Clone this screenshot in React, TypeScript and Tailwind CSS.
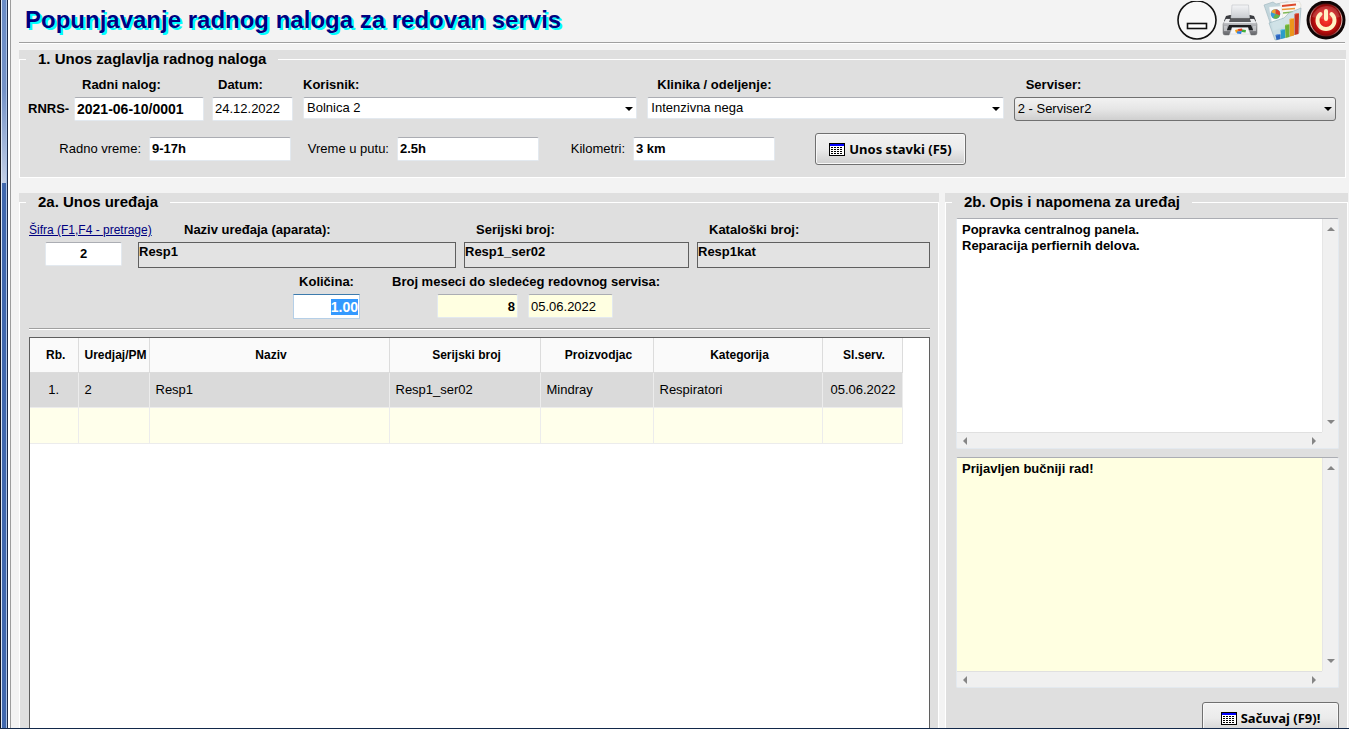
import { useEffect, useRef, useState } from "react";
import type { ReactNode } from "react";

type Item = {
  id: number;
  code: string;
  name: string;
  serial: string;
  vendor: string;
  category: string;
  lastService: string;
};

const items: Item[] = [
  {
    id: 1,
    code: "2",
    name: "Resp1",
    serial: "Resp1_ser02",
    vendor: "Mindray",
    category: "Respiratori",
    lastService: "05.06.2022",
  },
];

const inputBase =
  "h-6 rounded-xs border border-[#e3e9ef] border-t-[#abadb3] bg-white px-[2px] pb-[2px] text-[13px] leading-4 outline-none";
const readOnlyBase =
  "h-[26px] w-full border border-[#5f5f5f] bg-[#e3e3e3] pb-2 text-[13px] leading-4 font-bold outline-none";
const labelBase = "text-[13px] leading-4 font-bold whitespace-nowrap";
const buttonBase =
  "flex h-8 items-center justify-center gap-1 rounded-[3px] border border-[#707070] bg-linear-to-b from-[#f2f2f2] from-0% via-[#ebebeb] via-50% to-[#cfcfcf] text-[13px] leading-4 font-bold whitespace-nowrap shadow-[inset_0_0_0_1px_#f8f8f8] font-['Noto_Sans',sans-serif]";

const Group = ({ title, className, children }: { title: string; className?: string; children: ReactNode }) => (
  <div className={`flex bg-[#dfdfdf] ${className ?? ""}`}>
    <fieldset className="min-w-0 flex-1 border border-white">
      <legend className="ml-[6px] px-3 text-[15px] leading-[18px] font-bold">{title}</legend>
      {children}
    </fieldset>
  </div>
);

const Divider = () => <div className="h-[2px] border-t border-[#a0a0a0] bg-white" />;

const Arrow = ({ className }: { className?: string }) => (
  <svg viewBox="0 0 8 4" className={className} aria-hidden="true">
    <path d="M0 0h8L4 4z" fill="currentColor" />
  </svg>
);

type ComboProps = {
  id: string;
  label: string;
  value: string;
  className: string;
  labelClass: string;
  raised?: boolean;
};

const Combo = ({ id, label, value, className, labelClass, raised }: ComboProps) => (
  <div className={`min-w-0 ${className}`}>
    <label htmlFor={id} className={`${labelBase} block ${labelClass}`}>
      {label}
    </label>
    <div className="relative mt-1">
      <select
        id={id}
        defaultValue={value}
        className={
          raised
            ? "block h-6 w-full appearance-none rounded-[3px] border border-[#707070] bg-linear-to-b from-[#f2f2f2] via-[#e6e6e6] to-[#cfcfcf] px-[3px] text-[13px] leading-4 outline-none"
            : "block h-[22px] w-full appearance-none rounded-xs border border-[#e3e9ef] border-t-[#abadb3] bg-white px-[3px] text-[13px] leading-4 outline-none"
        }
      >
        <option>{value}</option>
      </select>
      <Arrow className="pointer-events-none absolute top-[10px] right-1 h-1 w-2" />
    </div>
  </div>
);

const TableIcon = () => (
  <svg viewBox="0 0 16 13" className="h-[13px] w-4" shapeRendering="crispEdges" aria-hidden="true">
    <rect width="16" height="13" fill="#000" />
    <rect x="1" y="1" width="14" height="11" fill="#fff" />
    <rect x="1" y="1" width="14" height="2" fill="#00f" />
    <path
      d="M2 4.5h12M2 6.5h12M2 8.5h12M2 10.5h12"
      stroke="#000"
      strokeWidth="1"
      strokeDasharray="2 1"
    />
  </svg>
);

const MinimizeIcon = () => (
  <svg viewBox="0 0 40 40" className="size-10" aria-hidden="true">
    <circle cx="20" cy="19" r="19" fill="#f8f8f8" stroke="#111" strokeWidth="1.6" />
    <rect x="10.5" y="22.5" width="19" height="5" fill="#fff" stroke="#111" strokeWidth="1.6" />
  </svg>
);

const PrinterIcon = () => (
  <svg viewBox="0 0 40 40" className="size-10" aria-hidden="true">
    <defs>
      <linearGradient id="paper" x2="0" y2="1">
        <stop stopColor="#f4f5f7" />
        <stop offset="1" stopColor="#c9ccd1" />
      </linearGradient>
      <linearGradient id="body" x2="0" y2="1">
        <stop stopColor="#dcdde0" />
        <stop offset=".5" stopColor="#a3a4a8" />
        <stop offset="1" stopColor="#5f6064" />
      </linearGradient>
    </defs>
    <path d="M6 15l4-1h20l4 1 2 5H4z" fill="#3a3b3f" />
    <path d="M12 4h16.500l1 13h-18.500z" fill="url(#paper)" stroke="#bfc2c7" strokeWidth=".6" />
    <path d="M6 18h28l3 5v9q0 2-2 2h-4l-2-4H11l-2 4H5q-2 0-2-2v-9z" fill="url(#body)" stroke="#77787b" strokeWidth=".5" />
    <path d="M6 18h28l2 4H4z" fill="#ebecee" />
    <path d="M10 18h20l1 3H9z" fill="#595a5e" />
    <path d="M9 24h22l2 5H7z" fill="#1d1e21" />
    <path d="M12 26.500h16l2 6.500H10z" fill="#f6f7f9" stroke="#c4c6ca" strokeWidth=".4" />
    <path d="M15 29l4-1 1 2-4 2z" fill="#f0a01c" />
    <path d="M18 28l4-.5.5 2.500h-4z" fill="#e33a26" />
    <path d="M22 28.500l4 .5-.5 2.500-4-.5z" fill="#42ad3d" />
    <path d="M17 30.500l5-.5-1 3-4-.5z" fill="#2f7ee0" />
    <path d="M4 25h3v5H4zM33 25h3v5h-3z" fill="#d2d3d6" fillOpacity=".7" />
  </svg>
);

const ReportIcon = () => (
  <svg viewBox="0 0 40 40" className="size-10" aria-hidden="true">
    <path d="M1 4l9-3 3 2 11-2 12 3-5 30-18 5z" fill="#c3d6dc" stroke="#9db5be" strokeWidth=".6" />
    <path d="M17 2l19-2 2 4-2 20-18 2z" fill="#f9f7f1" stroke="#d5d3cc" strokeWidth=".5" />
    <path d="M19 5l14-1.500" stroke="#dc4a2c" strokeWidth="1.800" />
    <path d="M19 8.500l13-1" stroke="#ee9a3a" strokeWidth="1.600" />
    <path d="M20 12l10-1" stroke="#7fb85a" strokeWidth="1.400" />
    <path d="M6 6l12-1 3 21-11 4z" fill="#f8fafa" stroke="#cfdade" strokeWidth=".4" />
    <circle cx="12.500" cy="13" r="4.800" fill="#3b9bd6" />
    <path d="M12.500 13V8.200a4.800 4.800 0 0 1 4.500 6.400z" fill="#e0412b" />
    <path d="M12.500 13l4.500 1.600a4.800 4.800 0 0 1-7 2.300z" fill="#69b345" />
    <path d="M12.500 13V8.200a4.800 4.800 0 0 0-4.300 3z" fill="#f2a52e" />
    <path d="M6 22l15-5 5-5 12-5-2 25-24 7z" fill="#c9dee4" fillOpacity=".88" stroke="#94b0ba" strokeWidth=".6" />
    <path d="M12.500 34l3.500-1 1.500.5V38l-4 1z" fill="#2a64bf" />
    <path d="M12.500 34l3.500-1 1.500.5-4 1z" fill="#6ea1e6" />
    <path d="M17.500 29l3-1 1.500.5v8.500l-4 1z" fill="#2c9cc9" />
    <path d="M17.500 29l3-1 1.500.5-4 1z" fill="#7fd0ea" />
    <path d="M22 24l3-1 1.500.5v12.500l-4 1z" fill="#6cb038" />
    <path d="M22 24l3-1 1.500.5-4 1z" fill="#b4e07c" />
    <path d="M26.500 18l3-1 1.500.5v17l-4 1z" fill="#ec951c" />
    <path d="M26.500 18l3-1 1.500.5-4 1z" fill="#ffd078" />
    <path d="M31.500 13l3-1 1.500.5-.5 20.500-4 1z" fill="#c93420" />
    <path d="M31.500 13l3-1 1.500.5-4 1z" fill="#f0806a" />
  </svg>
);

const PowerIcon = () => (
  <svg viewBox="0 0 40 40" className="size-10" aria-hidden="true">
    <defs>
      <radialGradient id="disc" cx=".5" cy=".5" r=".5">
        <stop stopColor="#ff3b30" />
        <stop offset=".65" stopColor="#d01212" />
        <stop offset="1" stopColor="#8a0606" />
      </radialGradient>
      <linearGradient id="rim" x2="0" y2="1">
        <stop stopColor="#5a0a0a" />
        <stop offset=".4" stopColor="#f0b6ae" />
        <stop offset=".7" stopColor="#e8c4be" />
        <stop offset="1" stopColor="#6b1010" />
      </linearGradient>
    </defs>
    <circle cx="20" cy="19" r="19.500" fill="#0f0505" />
    <circle cx="20" cy="19" r="16.500" fill="url(#rim)" />
    <circle cx="20" cy="19" r="15.500" fill="url(#disc)" />
    <path d="M6 16Q9 6 20 5t14 11Q20 20 6 16z" fill="#fff" fillOpacity=".16" />
    <path d="M14.500 13a8.500 8.500 0 1 0 11 0" fill="none" stroke="#fff2c4" strokeWidth="4" strokeLinecap="round" />
    <path d="M20 10v8" stroke="#fff2c4" strokeWidth="4" strokeLinecap="round" />
  </svg>
);

type NoteProps = { label: string; value: string; tint: string };

// multiline box with its own always visible scroll tracks
const NoteBox = ({ label, value, tint }: NoteProps) => (
  <div className="grid h-[231px] grid-cols-[1fr_16px] grid-rows-[1fr_16px] rounded-xs border border-[#e3e9ef] border-t-[#abadb3] bg-[#f0f0f0]">
    <textarea
      aria-label={label}
      defaultValue={value}
      className={`resize-none overflow-hidden px-[5px] pt-[3px] text-[13px] leading-4 font-bold outline-none ${tint}`}
    />
    <div className="flex flex-col items-center justify-between border-l border-[#e6e6e6] py-2 text-[#858585]">
      <Arrow className="h-1 w-2 rotate-180" />
      <Arrow className="h-1 w-2" />
    </div>
    <div className="flex items-center justify-between border-t border-[#e0e0e0] px-1 text-[#858585]">
      <Arrow className="h-1 w-2 rotate-90" />
      <Arrow className="h-1 w-2 -rotate-90" />
    </div>
  </div>
);

const WindowEdge = () => (
  <div className="flex w-[11px] shrink-0">
    <div className="w-px bg-[#15151f]" />
    <div className="w-px bg-[#dbe6f5]" />
    <div className="flex w-1 flex-col">
      <div className="h-[183px] bg-linear-to-b from-[#6a8cc6] via-[#7593c8] to-[#c3cfe6]" />
      <div className="flex-1 bg-[#4068ae]" />
    </div>
    <div className="w-px bg-[#a9c0e4]" />
    <div className="w-px bg-[#1b2947]" />
    <div className="w-[2px] bg-white" />
    <div className="w-px bg-[#9c9c9c]" />
  </div>
);

const headers = ["Rb.", "Uredjaj/PM", "Naziv", "Serijski broj", "Proizvodjac", "Kategorija", "Sl.serv."];

const App = () => {
  const [quantity, setQuantity] = useState<string>("1.00");
  const quantityRef = useRef<HTMLInputElement>(null);

  useEffect(() => {
    quantityRef.current?.focus();
    quantityRef.current?.select();
  }, []);

  return (
    <div className="flex h-screen overflow-hidden border-b border-[#12284a] bg-[#f3f3f3] font-['Liberation_Sans',Arial,sans-serif] text-black">
      <WindowEdge />
      <main className="flex min-w-0 flex-1 flex-col pl-2">
        <header className="mr-[3px] flex h-[42px] shrink-0 justify-between">
          <h1 className="pl-[6px] text-2xl leading-10 font-bold whitespace-nowrap text-[#000080] [text-shadow:2px_2px_0_#00ffff]">
            Popunjavanje radnog naloga za redovan servis
          </h1>
          <div className="flex gap-[3px]">
            <button aria-label="Umanji"><MinimizeIcon /></button>
            <button aria-label="Štampaj"><PrinterIcon /></button>
            <button aria-label="Izveštaji"><ReportIcon /></button>
            <button aria-label="Izlaz"><PowerIcon /></button>
          </div>
        </header>
        <div className="mr-1">
          <Divider />
        </div>

        <Group title="1. Unos zaglavlja radnog naloga" className="mt-[6px] mr-[3px] h-32 shrink-0">
          <div className="flex gap-[10px] pt-[9px] pr-[9px] pl-2">
            <div className="flex gap-2">
              <div>
                <label htmlFor="nalog" className={`${labelBase} block pl-[54px]`}>Radni nalog:</label>
                <div className="mt-1 flex items-center gap-1">
                  <span className="w-[42px] text-[13px] leading-4 font-bold">RNRS-</span>
                  <input id="nalog" defaultValue="2021-06-10/0001" className="h-6 w-[130px] rounded-xs border border-[#e3e9ef] border-t-[#abadb3] bg-white px-[2px] text-sm font-bold outline-none" />
                </div>
              </div>
              <div>
                <label htmlFor="datum" className={`${labelBase} block pl-[6px]`}>Datum:</label>
                <input id="datum" defaultValue="24.12.2022" className={`${inputBase} mt-1 w-[81px]`} />
              </div>
            </div>
            <Combo id="korisnik" label="Korisnik:" value="Bolnica 2" className="flex-[334]" labelClass="" />
            <Combo id="klinika" label="Klinika / odeljenje:" value="Intenzivna nega" className="flex-[356]" labelClass="pl-[10px]" />
            <Combo id="serviser" label="Serviser:" value="2 - Serviser2" className="flex-[322]" labelClass="pl-3" raised />
          </div>
          <div className="flex items-center gap-2 pt-3 pl-2 text-[13px] leading-4">
            <label htmlFor="vreme" className="w-[113px] text-right">Radno vreme:</label>
            <input id="vreme" defaultValue="9-17h" className={`${inputBase} w-[142px] font-bold`} />
            <label htmlFor="put" className="w-[90px] text-right">Vreme u putu:</label>
            <input id="put" defaultValue="2.5h" className={`${inputBase} w-[142px] font-bold`} />
            <label htmlFor="km" className="w-[78px] text-right">Kilometri:</label>
            <input id="km" defaultValue="3 km" className={`${inputBase} w-[142px] font-bold`} />
            <button className={`${buttonBase} ml-8 w-[151px]`}>
              <TableIcon />
              Unos stavki (F5)
            </button>
          </div>
        </Group>

        <div className="mt-[15px] mr-px flex min-h-[640px] flex-1 gap-[6px]">
          <Group title="2a. Unos uređaja" className="min-w-0 flex-[920]">
            <div className="flex h-full flex-col pr-2 pl-[9px]">
              <div className="flex gap-2 pt-[11px]">
                <div className="w-[101px]">
                  <a href="#pretraga" className="block text-xs leading-4 whitespace-nowrap text-[#000080] underline">
                    Šifra (F1,F4 - pretrage)
                  </a>
                  <input aria-label="Šifra" defaultValue="2" className={`${inputBase} mt-1 ml-4 w-[77px] text-center font-bold`} />
                </div>
                <div className="flex-[318]">
                  <label htmlFor="naziv" className={`${labelBase} block pl-[46px]`}>Naziv uređaja (aparata):</label>
                  <input id="naziv" readOnly value="Resp1" className={`${readOnlyBase} mt-1`} />
                </div>
                <div className="flex-[225]">
                  <label htmlFor="serijski" className={`${labelBase} block pl-3`}>Serijski broj:</label>
                  <input id="serijski" readOnly value="Resp1_ser02" className={`${readOnlyBase} mt-1`} />
                </div>
                <div className="flex-[233]">
                  <label htmlFor="kataloski" className={`${labelBase} block pl-3`}>Kataloški broj:</label>
                  <input id="kataloski" readOnly value="Resp1kat" className={`${readOnlyBase} mt-1`} />
                </div>
              </div>
              <div className="flex gap-8 pt-[6px] pb-[9px] pl-[264px]">
                <div className="w-[67px]">
                  <label htmlFor="kolicina" className={`${labelBase} block text-center`}>Količina:</label>
                  <input
                    id="kolicina"
                    ref={quantityRef}
                    value={quantity}
                    onChange={e => setQuantity(e.target.value)}
                    className="mt-1 h-[25px] w-full border border-[#b5cfe7] border-t-[#3d7bad] bg-white px-[1px] text-right text-sm font-bold outline-none selection:bg-[#3399ff] selection:text-white"
                  />
                </div>
                <div>
                  <label htmlFor="meseci" className={`${labelBase} block`}>Broj meseci do sledećeg redovnog servisa:</label>
                  <div className="mt-1 flex gap-[10px] pl-[45px]">
                    <input id="meseci" defaultValue="8" className="h-6 w-[81px] rounded-xs border border-[#e3e9ef] border-t-[#abadb3] bg-[#ffffe1] px-[2px] text-right text-[13px] font-bold outline-none" />
                    <input aria-label="Sledeći servis" defaultValue="05.06.2022" className="h-6 w-[85px] rounded-xs border border-[#e3e9ef] border-t-[#abadb3] bg-[#ffffe1] px-[2px] text-[13px] outline-none" />
                  </div>
                </div>
              </div>
              <Divider />
              <div className="mt-[7px] min-h-0 flex-1 border border-[#5f5f5f] bg-white">
                <table className="w-[97%] table-fixed border-collapse text-xs leading-4">
                  <colgroup>
                    <col className="w-12" />
                    <col className="w-[71px]" />
                    <col className="w-[240px]" />
                    <col className="w-[151px]" />
                    <col className="w-[113px]" />
                    <col className="w-[169px]" />
                    <col className="w-20" />
                  </colgroup>
                  <thead>
                    <tr className="h-[34px] bg-[#fafafa]">
                      {headers.map(header => (
                        <th key={header} className="border-r border-b border-[#dcdcdc] p-0 pl-1 font-bold">
                          {header}
                        </th>
                      ))}
                    </tr>
                  </thead>
                  <tbody>
                    {items.map(item => (
                      <tr key={item.id} className="h-[35px] bg-[#dadada] text-[13px] *:border-r *:border-b *:border-[#ececec] *:px-[6px]">
                        <td className="text-center">{item.id}.</td>
                        <td>{item.code}</td>
                        <td>{item.name}</td>
                        <td>{item.serial}</td>
                        <td>{item.vendor}</td>
                        <td>{item.category}</td>
                        <td className="text-right">{item.lastService}</td>
                      </tr>
                    ))}
                    <tr className="h-9 bg-[#ffffeb] *:border-r *:border-b *:border-[#ececec]">
                      {headers.map(header => (
                        <td key={header} />
                      ))}
                    </tr>
                  </tbody>
                </table>
              </div>
            </div>
          </Group>

          <Group title="2b. Opis i napomena za uređaj" className="min-w-0 flex-[403]">
            <div className="flex flex-col gap-2 pt-[7px] pr-2 pl-[10px]">
              <NoteBox
                label="Opis"
                value={"Popravka centralnog panela.\nReparacija perfiernih delova."}
                tint="bg-white"
              />
              <NoteBox label="Napomena" value="Prijavljen bučniji rad!" tint="bg-[#ffffe1]" />
              <button className={`${buttonBase} mt-[6px] w-[137px] self-end`}>
                <TableIcon />
                Sačuvaj (F9)!
              </button>
            </div>
          </Group>
        </div>
      </main>
    </div>
  );
};

export default App;
